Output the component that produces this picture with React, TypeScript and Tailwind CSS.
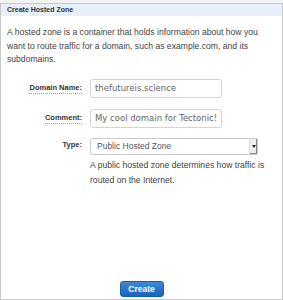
export default function App() {
  return (
    <div className="h-[300px] w-[283px] overflow-hidden bg-[#f2f2f2] font-['Liberation_Sans',Arial,sans-serif]">
      <div className="mt-[3px] flex h-[297px] flex-col border border-[#c8c8c8] bg-white">
        <div className="flex h-[12px] items-center bg-[#e6effa] px-[6px] text-[7px] font-bold text-[#333]">
          Create Hosted Zone
        </div>
        <p className="mt-[10px] px-[6px] text-[8.6px] leading-[13.5px] text-[#444]">
          A hosted zone is a container that holds information about how you want to route traffic for a domain, such as example.com, and its subdomains.
        </p>
        <div className="mt-[12px] grid grid-cols-[81px_1fr] gap-x-[8px] gap-y-[11px] text-[#333]">
          <label className="self-center justify-self-end border-b border-dotted border-[#999] text-[7.5px] font-bold leading-[10px]">
            Domain Name:
          </label>
          <input
            readOnly
            value="thefutureis.science"
            className="h-[19px] w-[132px] rounded-[3px] border border-[#d4d4d4] px-[4px] font-['DejaVu_Sans',sans-serif] text-[8.5px] text-[#666] outline-none"
          />
          <label className="self-center justify-self-end border-b border-dotted border-[#999] text-[7.5px] font-bold leading-[10px]">
            Comment:
          </label>
          <input
            readOnly
            value="My cool domain for Tectonic!"
            className="h-[19px] w-[132px] rounded-[3px] border border-[#d4d4d4] px-[4px] font-['DejaVu_Sans',sans-serif] text-[8.5px] text-[#666] outline-none"
          />
          <label className="mt-[1px] self-start justify-self-end text-[7.5px] font-bold leading-[10px]">Type:</label>
          <div className="-mt-[1px]">
            <div className="flex h-[17px] w-[168px] items-center rounded-[2px] border border-[#ccc] pl-[6px]">
              <span className="flex-1 text-[8.5px] text-[#555]">Public Hosted Zone</span>
              <span className="flex h-[15px] w-[8px] items-center justify-center border-l border-[#ddd] bg-[#f0f0f0] shadow-[inset_-1px_-1px_0_#888]">
                <svg width="4" height="3" viewBox="0 0 4 3">
                  <path d="M0 0h4L2 3z" fill="#222" />
                </svg>
              </span>
            </div>
            <p className="mt-[3px] pr-[6px] text-[8.6px] leading-[15px] text-[#444]">
              A public hosted zone determines how traffic is routed on the Internet.
            </p>
          </div>
        </div>
        <div className="mt-auto flex justify-center">
          <button className="mb-[2px] h-[16px] w-[44px] rounded-[3px] border border-[#1a5fa8] bg-gradient-to-b from-[#3b8ad9] to-[#1a64bc] text-[8.5px] font-bold text-white">
            Create
          </button>
        </div>
      </div>
    </div>
  );
}
